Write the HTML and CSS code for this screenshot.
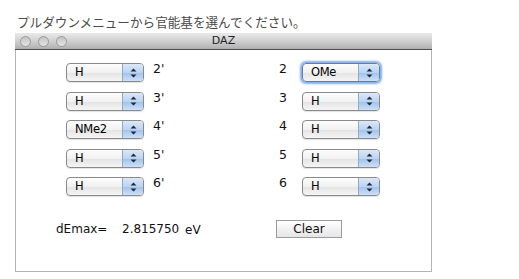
FILE: index.html
```html
<!DOCTYPE html>
<html lang="ja">
  <head>
    <meta charset="UTF-8" />
    <title>DAZ</title>
    <link rel="stylesheet" href="styles.css">
  </head>
  <body>
    <p class="lead">プルダウンメニューから官能基を選んでください。</p>

    <div class="window">
      <!-- タイトルバー -->
      <div class="titlebar">
        <div class="lights">
          <span class="light"></span>
          <span class="light"></span>
          <span class="light"></span>
        </div>
        <span class="title">DAZ</span>
        <span></span>
      </div>

      <div class="content">
        <div class="columns">
          <div class="col col-left">
            <div class="row">
              <div class="select"><span class="val">H</span><span class="arrows"><svg width="7" height="10" viewBox="0 0 7 10"><path d="M3.5 0.5 L6.5 3.5 L0.5 3.5 Z M0.5 6.5 L6.5 6.5 L3.5 9.5 Z" fill="#1e2a38"/></svg></span></div>
              <span class="pos">2'</span>
            </div>
            <div class="row">
              <div class="select"><span class="val">H</span><span class="arrows"><svg width="7" height="10" viewBox="0 0 7 10"><path d="M3.5 0.5 L6.5 3.5 L0.5 3.5 Z M0.5 6.5 L6.5 6.5 L3.5 9.5 Z" fill="#1e2a38"/></svg></span></div>
              <span class="pos">3'</span>
            </div>
            <div class="row">
              <div class="select"><span class="val">NMe2</span><span class="arrows"><svg width="7" height="10" viewBox="0 0 7 10"><path d="M3.5 0.5 L6.5 3.5 L0.5 3.5 Z M0.5 6.5 L6.5 6.5 L3.5 9.5 Z" fill="#1e2a38"/></svg></span></div>
              <span class="pos">4'</span>
            </div>
            <div class="row">
              <div class="select"><span class="val">H</span><span class="arrows"><svg width="7" height="10" viewBox="0 0 7 10"><path d="M3.5 0.5 L6.5 3.5 L0.5 3.5 Z M0.5 6.5 L6.5 6.5 L3.5 9.5 Z" fill="#1e2a38"/></svg></span></div>
              <span class="pos">5'</span>
            </div>
            <div class="row">
              <div class="select"><span class="val">H</span><span class="arrows"><svg width="7" height="10" viewBox="0 0 7 10"><path d="M3.5 0.5 L6.5 3.5 L0.5 3.5 Z M0.5 6.5 L6.5 6.5 L3.5 9.5 Z" fill="#1e2a38"/></svg></span></div>
              <span class="pos">6'</span>
            </div>
          </div>

          <div class="col col-right">
            <div class="row">
              <span class="pos">2</span>
              <div class="select focus"><span class="val">OMe</span><span class="arrows"><svg width="7" height="10" viewBox="0 0 7 10"><path d="M3.5 0.5 L6.5 3.5 L0.5 3.5 Z M0.5 6.5 L6.5 6.5 L3.5 9.5 Z" fill="#1e2a38"/></svg></span></div>
            </div>
            <div class="row">
              <span class="pos">3</span>
              <div class="select"><span class="val">H</span><span class="arrows"><svg width="7" height="10" viewBox="0 0 7 10"><path d="M3.5 0.5 L6.5 3.5 L0.5 3.5 Z M0.5 6.5 L6.5 6.5 L3.5 9.5 Z" fill="#1e2a38"/></svg></span></div>
            </div>
            <div class="row">
              <span class="pos">4</span>
              <div class="select"><span class="val">H</span><span class="arrows"><svg width="7" height="10" viewBox="0 0 7 10"><path d="M3.5 0.5 L6.5 3.5 L0.5 3.5 Z M0.5 6.5 L6.5 6.5 L3.5 9.5 Z" fill="#1e2a38"/></svg></span></div>
            </div>
            <div class="row">
              <span class="pos">5</span>
              <div class="select"><span class="val">H</span><span class="arrows"><svg width="7" height="10" viewBox="0 0 7 10"><path d="M3.5 0.5 L6.5 3.5 L0.5 3.5 Z M0.5 6.5 L6.5 6.5 L3.5 9.5 Z" fill="#1e2a38"/></svg></span></div>
            </div>
            <div class="row">
              <span class="pos">6</span>
              <div class="select"><span class="val">H</span><span class="arrows"><svg width="7" height="10" viewBox="0 0 7 10"><path d="M3.5 0.5 L6.5 3.5 L0.5 3.5 Z M0.5 6.5 L6.5 6.5 L3.5 9.5 Z" fill="#1e2a38"/></svg></span></div>
            </div>
          </div>
        </div>

        <!-- 結果 -->
        <div class="result">
          <span class="result-label">dEmax=</span>
          <span class="result-value">2.815750 <span class="unit">eV</span></span>
          <button class="btn">Clear</button>
        </div>
      </div>
    </div>
  </body>
</html>
```

FILE: styles.css
```css
body {
  margin: 0;
  background: #fff;
  font-family: "DejaVu Sans", "Noto Sans CJK JP", sans-serif;
  color: #111;
}

.lead {
  margin: 0;
  padding: 14px 0 0 17px;
  font-family: "Noto Sans CJK JP", sans-serif;
  font-size: 12.6px;
  line-height: 16px;
  color: #4a4a4a;
}

.window {
  margin: 3px 0 0 15px;
  width: 417px;
}

.titlebar {
  display: grid;
  grid-template-columns: 1fr auto 1fr;
  align-items: center;
  height: 16px;
  background: linear-gradient(#e9e9e9, #d0d0d0 50%, #b0b0b0);
  border-bottom: 1px solid #4f4f4f;
}

.lights {
  display: flex;
  gap: 7px;
  padding-left: 5px;
}

.light {
  width: 9px;
  height: 9px;
  border-radius: 50%;
  border: 1px solid #9a9a9a;
  background: linear-gradient(#c4c4c4, #e4e4e4);
}

.title {
  font-size: 11px;
  color: #222;
  line-height: 16px;
}

.content {
  height: 222px;
  box-sizing: border-box;
  border: 1px solid #b4b4b4;
  border-top: 0;
  padding: 13px 0 0 40px;
}

.columns {
  display: flex;
  margin-left: 10px;
}

.col {
  display: flex;
  flex-direction: column;
  gap: 9.5px;
}

.col-left {
  width: 213px;
}

.row {
  display: flex;
  align-items: flex-start;
}

.pos {
  font-size: 12.5px;
  line-height: 14px;
  margin-top: -1px;
}

.col-left .pos {
  margin-left: 9px;
}

.col-right .pos {
  width: 23px;
}

.select {
  display: flex;
  width: 78px;
  height: 19px;
  box-sizing: border-box;
  border: 1px solid #8a8a8a;
  border-radius: 4px;
  overflow: hidden;
  background: linear-gradient(#fdfdfd, #f1f1f1 50%, #e3e3e3 51%, #f5f5f5);
  box-shadow: 0 1px 1px rgba(0, 0, 0, 0.12);
}

.select.focus {
  box-shadow: 0 0 2px 2px rgba(92, 148, 222, 0.75);
  border-color: #5e7fa8;
}

.val {
  flex: 1;
  padding-left: 8px;
  font-size: 11.5px;
  letter-spacing: -0.3px;
  line-height: 17px;
  color: #000;
}

.arrows {
  width: 20px;
  display: flex;
  align-items: center;
  justify-content: center;
  border-left: 1px solid #8fa9c9;
  background: linear-gradient(#dbe8f8, #bcd3f1 50%, #9fc2ec 51%, #cde0f6);
}

.result {
  display: flex;
  align-items: center;
  margin-top: 24px;
  font-size: 12px;
}

.result-label {
  width: 66px;
}

.result-value {
  width: 154px;
}

.unit {
  margin-left: 2px;
  position: relative;
  top: 1px;
}

.btn {
  width: 66px;
  height: 18px;
  padding: 0;
  border: 1px solid #9c9c9c;
  border-radius: 0;
  background: linear-gradient(#ffffff, #f2f2f2 50%, #e6e6e6);
  font-family: "DejaVu Sans", sans-serif;
  font-size: 12px;
  color: #111;
}
```
